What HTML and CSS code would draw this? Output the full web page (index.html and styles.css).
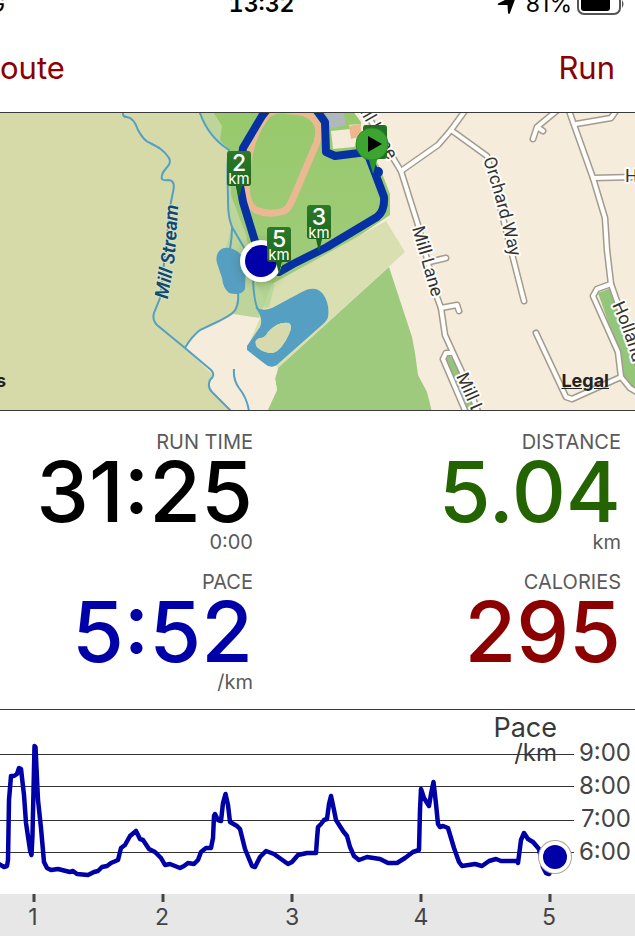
FILE: index.html
```html
<!DOCTYPE html>
<html lang="en">
<head>
<meta charset="utf-8">
<meta name="viewport" content="width=device-width, initial-scale=1">
<title>Run</title>
<link rel="stylesheet" href="styles.css">
</head>
<body>
<div class="status">
  <span class="carrier">G</span>
  <span class="clock">13:32</span>
  <span class="power">
    <svg class="arrow" viewBox="0 0 20 20" aria-hidden="true"><path d="M20 0 L1 9.500 Q0 11 2 11 L10.500 11 L11 19 Q12 21 13 19 Z"/></svg>
    <span>81%</span>
    <svg class="battery" viewBox="0 0 48 22" aria-hidden="true"><rect x="1" y="1" width="42" height="20" rx="6" fill="none" stroke="#555" stroke-width="2"/><rect x="4" y="4" width="29" height="14" rx="3"/><path d="M45 7 Q48 11 45 15Z" fill="#555"/></svg>
  </span>
</div>
<nav class="nav">
  <button class="nav-btn" type="button">oute</button>
  <button class="nav-btn" type="button">Run</button>
</nav>
<main>
<section class="map">
  <svg class="art" viewBox="0 113 635 297" role="img" aria-label="Route map">
    <defs>
      <linearGradient id="park" x1="0" y1="0" x2="0" y2="1"><stop offset="0" stop-color="#98c96c"/><stop offset="1" stop-color="#a0cc7c"/></linearGradient>
      <linearGradient id="pin" x1="0" y1="0" x2="0" y2="1"><stop offset="0" stop-color="#2b7a2a"/><stop offset="1" stop-color="#19601b"/></linearGradient>
      <filter id="soft" x="-50%" y="-50%" width="200%" height="200%"><feDropShadow dx="0" dy="2" stdDeviation="5" flood-color="#304020" flood-opacity=".35"/></filter>
      <path id="orchard" d="M483 159 Q492 186 499 213 T514 275"/>
      <path id="stream" d="M168 299 Q170 284 174 264 Q177 230 179 190"/>
      <path id="holland" d="M612 305 Q622 326 630 352 L640 390"/>
      <g id="roads" fill="none" stroke-linecap="round" stroke-linejoin="round">
        <path d="M362 106 L390 153 L401 171 L418 225 L437 297 L441 308 L445 335 L455 357 L467 383 L479 414"/>
        <path d="M401 171 L438 145 L451 130 L467 108"/>
        <path d="M451 130 L487 156 L501 210 L513 258 L524 301"/>
        <path d="M560 108 L537 127 L533 139 M537 127 L543 131"/>
        <path d="M568 108 L593 178 L605 218 L607 250 L611 284 L619 307 L640 370"/>
        <path d="M576 124 L611 118 L618 108 M593 178 L640 177"/>
        <path d="M611 284 L597 289 L593 296 L618 352 L621 377 L630 388 L640 394"/>
        <path d="M621 377 L572 399 L566 397 L536 333"/>
        <path d="M425 263 L446 258 M441 308 L457 305 L459 311"/>
        <path d="M452 353 L446 353 L443 359 L467 415"/>
      </g>
    </defs>
    <rect y="110" width="635" height="302" fill="#f5ecdb"/>
    <path fill="#d6daa9" d="M0 110H250V412H0Z"/>
    <path fill="#bdd59b" d="M198 110L207 127L217 140L229 150L228 202L232 227L225 250L238 295L233 314L262 320L275 280L250 200V110Z"/>
    <path fill="url(#park)" d="M212 110L222 126L220 140L229 150L231 195L246 235L256 282L265 300L390 215L390 194L380 168L360 132L361 122L352 110Z"/>
    <path fill="#dadfb1" d="M272 284L386 221L405 252L278 368L250 340Z"/>
    <path fill="#9dca7d" d="M389 267L412 337L415 353L418 375L427 392L432 412H266L277 390L275 378L278 368Z"/>
    <path fill="#b5d698" opacity=".8" d="M258 281L275 284L269 307L258 308Z"/>
    <path fill="#f5ecdb" d="M233 314L260 318L247 348L272 367L278 369L275 379L277 390L267 412H231L209 388L209 381L214 376L185 348L200 330L217 322Z"/>
    <path fill="#afb8ba" d="M325 110L343 110L346 125L330 129Z"/>
    <path fill="#f3ead8" d="M331 131L350 129L349 125L360 124L361 139L354 147L333 149Z"/>
    <path fill="#edb68e" d="M349 126L360 124L362 136L351 139Z"/>
    <path fill="#94c67a" d="M448 355L455 360L476 412H467L446 361Z"/>
    <path fill="#94c67a" d="M598 293L611 288L640 378V395L622 376L618 350Z"/>
    <path fill="none" stroke="#eab992" stroke-width="7" d="M267 115C253 133 249 151 247 170S246 205 256 210C265 214 275 214 284 211C290 208 291 202 294 196L317 142C322 126 316 111 290 111Q276 108 267 115Z"/>
    <g fill="none" stroke="#559fc2" stroke-width="2">
      <path d="M124 110Q121 117 127 117Q134 118 138 130Q144 141 150 143C158 147 164 150 169 158C173 166 162 169 162 176Q160 181 168 180Q176 180 173 192L171 202L160 298L154 313Q152 320 157 325L185 348L211 370Q216 375 210 380Q207 387 212 392L231 411"/>
      <path d="M199 110Q207 136 229 150C226 165 228 180 228 202Q228 217 232 227Q232 238 230 249M232 227L246 251M238 293C240 313 230 315 217 322L200 330Q191 337 185 348M234 369Q233 380 239 388Q247 398 249 411M253 278Q254 307 260 312"/>
    </g>
    <path fill="#559fc2" d="M220 250Q225 246 233 249Q243 253 246 265L245 289Q242 296 229 293Q223 288 222 278L217 263Q215 255 220 250Z"/>
    <path fill="#559fc2" fill-rule="evenodd" d="M255 307Q263 312 272 308L300 293Q315 284 323 294Q330 304 328 317Q327 321 322 325L279 363Q272 370 265 364L247 350V346L260 327Q264 318 255 307ZM268 332Q278 321 289 323Q293 326 289 334Q282 350 273 353Q263 353 257 347Q253 340 260 338Q265 338 268 332Z"/>
    <path fill="#d6daad" d="M268 332Q278 321 289 323Q293 326 289 334Q282 350 273 353Q263 353 257 347Q253 340 260 338Q265 338 268 332Z"/>
    <use href="#roads" stroke="#a39b90" stroke-width="7"/>
    <use href="#roads" stroke="#fffefa" stroke-width="4"/>
    <g class="road-name">
      <text transform="translate(352 98) rotate(60)">Mill Lane</text>
      <text transform="translate(412 228) rotate(74)">Mill Lane</text>
      <text transform="translate(456 376) rotate(66)">Mill Lane</text>
      <text><textPath href="#orchard">Orchard Way</textPath></text>
      <text><textPath href="#holland">Holland</textPath></text>
      <text x="625" y="182">H</text>
    </g>
    <text class="water-name"><textPath href="#stream">Mill Stream</textPath></text>
    <path fill="none" stroke="#0631a3" stroke-width="8" stroke-linejoin="round" d="M270 106L262 116L243 148L239 180L243 202L261 261L279 272L293 264L327 247L377 217Q385 211 384 197L375 173L367 152L335 156L326 152L325 122L315 108"/>
    <circle cx="378" cy="172" r="5" fill="#0631a3"/>
    <circle cx="261" cy="261" r="21" fill="#fff" filter="url(#soft)"/><circle cx="261" cy="261" r="16" fill="#0000a8"/>
    <g class="marker">
      <path fill="url(#pin)" d="M230 151H248Q251 151 251 154V183Q251 186 248 186H242L239 198L236 186H230Q227 186 227 183V154Q227 151 230 151Z"/>
      <path fill="url(#pin)" d="M310 205H328Q331 205 331 208V236Q331 239 328 239H322L319 252L316 239H310Q307 239 307 236V208Q307 205 310 205Z"/>
      <path fill="url(#pin)" d="M270 227H288Q291 227 291 230V259Q291 262 288 262H282L279 274L276 262H270Q267 262 267 259V230Q267 227 270 227Z"/>
      <text class="num" x="239" y="171">2</text><text class="unit" x="239" y="184">km</text>
      <text class="num" x="319" y="225">3</text><text class="unit" x="319" y="238">km</text>
      <text class="num" x="279" y="247">5</text><text class="unit" x="279" y="260">km</text>
    </g>
    <rect x="363" y="125" width="24" height="34" rx="3" fill="#236f24"/>
    <path fill="#2f9530" d="M365 157L369 160L373 174L377 160L380 157Z"/>
    <circle cx="372" cy="144" r="16" fill="#3ca532" stroke="#2c8a2b"/>
    <path d="M368 136L382 144L368 152Z"/>
  </svg>
  <span class="maps">s</span>
  <a class="legal" href="#legal">Legal</a>
</section>
<section class="stats">
  <div class="stat"><div class="label">RUN TIME</div><div class="value">31:25</div><div class="label">0:00</div></div>
  <div class="stat"><div class="label">DISTANCE</div><div class="value green">5.04</div><div class="label">km</div></div>
  <div class="stat"><div class="label">PACE</div><div class="value blue">5:52</div><div class="label">/km</div></div>
  <div class="stat"><div class="label">CALORIES</div><div class="value red">295</div></div>
</section>
<section class="chart">
  <svg class="art" viewBox="0 710 635 226" role="img" aria-label="Pace per kilometre">
    <rect y="894" width="635" height="42" fill="#e7e7e8"/>
    <path stroke="#333336" d="M0 754.500H574M0 786.500H574M0 820.500H574M0 852.500H574"/>
    <path stroke="#444" stroke-width="3" d="M34 894V902M163 894V902M292 894V902M421 894V902M550 894V902"/>
    <g class="title"><text x="557" y="737">Pace</text><text class="small" x="557" y="761">/km</text></g>
    <g class="ylab"><text x="631" y="761">9:00</text><text x="631" y="794">8:00</text><text x="631" y="827">7:00</text><text x="631" y="860">6:00</text></g>
    <g class="xlab"><text x="33" y="925">1</text><text x="162" y="925">2</text><text x="292" y="925">3</text><text x="421" y="925">4</text><text x="549" y="925">5</text></g>
    <path fill="none" stroke="#0000a8" stroke-width="4.500" stroke-linejoin="round" stroke-linecap="round" d="M-3 863L4 867L7 866L8 860L9 800L11 776L14 776L17 774L19 768L21 769L24 795L26 823L30 850L31.500 855L32.500 835L34.500 746L35.500 747L38 800L41 828L44 862L47 868L51 870L58 869L70 872L73 871L77 874L88 875L94 872L98 871L102 867L107 866L111 863L118 860L121 848L125 845L130 836L136 831L140 839L143 840L149 849L155 852L161 858L165 865L170 864L180 868L184 866L188 863L194 864L198 860L201 852L206 848L211 848L213 838L214 816L215 814L218 820L221 821L223 803L225.500 794L228 805L230 822L237 826L240 829L245 849L252 866L255 867L260 857L266 851L274 854L288 864L292 862L298 855L307 853L316 853L317 839L318 827L321 824L324 820L327 819L329 804L331 796L334 810L336 820L343 831L347 836L350 847L354 856L359 860L367 857L380 859L388 863L397 863L405 858L413 852L419 850L420 810L421 789L424 798L429 806L431 794L433.500 782L436 804L438 824L440 827L443 826L448 828L454 848L459 862L462 866L475 864L482 866L489 861L496 859L501 861L517 861L518 863L521 840L524 833L528 839L533 842L539 849L543 867L546 873L549 874L553 868"/>
    <circle cx="555" cy="857" r="17" fill="#aaa69b"/><circle cx="555" cy="857" r="16" fill="#fff"/><circle cx="555" cy="857" r="12" fill="#0000a8"/>
  </svg>
</section>
</main>
</body>
</html>
```
FILE: styles.css
```css
* { box-sizing: border-box; }
body {
  margin: 0;
  background: #fff;
  color: #000;
  font-family: Inter, "Liberation Sans", sans-serif;
  overflow-x: hidden;
}
.status {
  height: 16px;
  overflow: hidden;
  display: grid;
  grid-template-columns: 9fr auto 13fr;
  align-content: end;
  padding-right: 10px;
  font-size: 23px;
  line-height: 24px;
}
.carrier { margin-left: -12px; }
.clock { font-weight: 600; font-variant-numeric: tabular-nums; }
.power {
  display: flex;
  justify-content: flex-end;
  align-items: flex-end;
  gap: 5px;
}
.arrow { width: 20px; height: 20px; margin: 0 4px 2px 0; }
.battery { width: 48px; height: 22px; margin-bottom: 1px; }
.nav {
  display: flex;
  justify-content: space-between;
  padding: 32px 20px 24px 0;
}
.nav-btn {
  border: 0;
  padding: 0;
  background: none;
  color: #8b0000;
  font: 400 31px/40px Inter, sans-serif;
}
.map {
  position: relative;
  border-top: 1px solid #3a3a3a;
  border-bottom: 1px solid #3a3a3a;
  overflow: hidden;
}
.art { display: block; width: 100%; height: auto; }
.road-name, .water-name {
  font-family: Roboto, sans-serif;
  font-size: 18px;
  paint-order: stroke;
  stroke-linejoin: round;
}
.road-name { fill: #333; stroke: #fffdf8; stroke-width: 4px; }
.water-name {
  fill: #12486b;
  stroke: #d6e2cc;
  stroke-width: 2px;
  font-size: 19px;
  font-weight: 600;
  font-style: italic;
}
.marker { fill: #fff; text-anchor: middle; }
.num { font-size: 23px; font-weight: 500; }
.unit { font-size: 15px; }
.maps, .legal {
  position: absolute;
  bottom: 17px;
  font-size: 18px;
  line-height: 24px;
  font-weight: 700;
  color: #222;
}
.maps { left: -4px; }
.legal { right: 26px; }
.stats {
  display: grid;
  grid-template-columns: 11fr 16fr;
  row-gap: 16px;
  padding: 19px 14px 15px 0;
  border-bottom: 1px solid #3a3a3a;
  text-align: right;
}
.label { font-size: 20px; line-height: 24px; color: #5a5a5c; }
.value { font-size: 84px; line-height: 76px; font-weight: 500; }
.green { color: #236300; }
.blue { color: #0000a8; }
.red { color: #8b0000; }
.title, .ylab { text-anchor: end; fill: #38383a; }
.title { font-size: 27px; }
.small { font-size: 24px; }
.ylab, .xlab { font-size: 24px; fill: #444446; }
.xlab { font-size: 23px; text-anchor: middle; }
```
